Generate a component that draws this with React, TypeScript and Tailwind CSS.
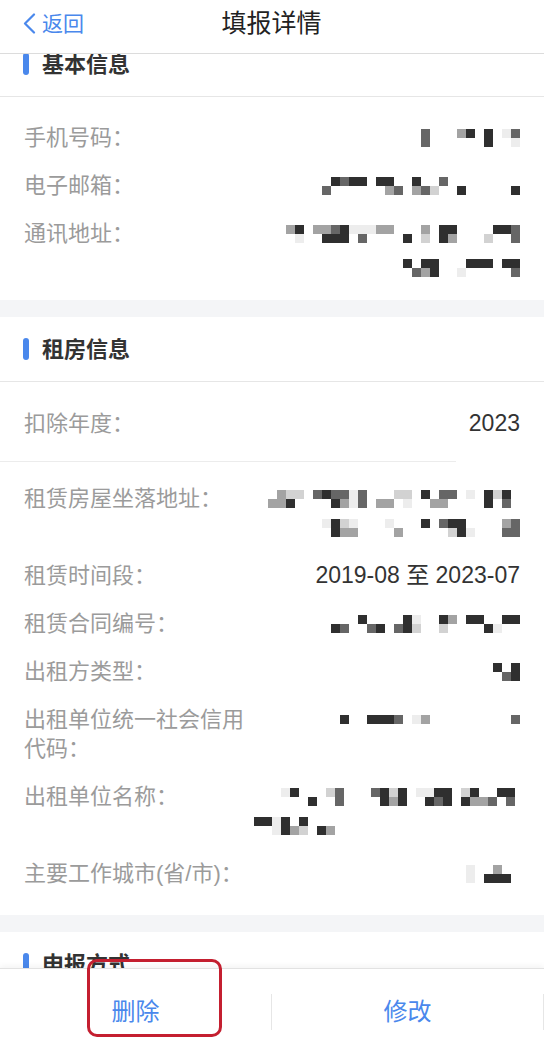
import React from "react";

type Line = { rows: string[]; h?: string };

// pixelated (redacted) values: a = darkest ... e = lightest, "." = empty
const shade: Record<string, string> = {
  a: "bg-[#2f2f2f]",
  b: "bg-[#666666]",
  c: "bg-[#a3a3a3]",
  d: "bg-[#d2d2d2]",
  e: "bg-[#ededed]",
  ".": "bg-transparent",
};

const Mosaic: React.FC<{ lines: Line[] }> = ({ lines }) => (
  <div className="flex flex-col items-end">
    {lines.map((line, i) => (
      <div key={i} className={`flex flex-col justify-center ${line.h ?? "h-[29px]"}`}>
        {line.rows.map((row, j) => (
          <div key={j} className="flex">
            {row.split("").map((ch, k) => (
              <span key={k} className={`block h-[9px] w-[9px] ${shade[ch]}`} />
            ))}
          </div>
        ))}
      </div>
    ))}
  </div>
);

const Row: React.FC<{ label: string; children: React.ReactNode }> = ({ label, children }) => (
  <div className="flex items-start justify-between">
    <div className="w-[230px] shrink-0 text-[22px] leading-[29px] text-[#9b9b9b]">{label}</div>
    <div className="text-right text-[23px] leading-[29px] text-[#333333]">{children}</div>
  </div>
);

const SectionHeader: React.FC<{ title: string }> = ({ title }) => (
  <div className="flex h-[65px] items-center gap-[13px] border-b border-[#e6e6e6] px-[23px]">
    <span className="block h-[22px] w-[6px] rounded-full bg-[#4a88ec]" />
    <span className="text-[22px] font-bold leading-[29px] text-[#333333]">{title}</span>
  </div>
);

const Gap = () => <div className="h-[17px] bg-[#f4f5f7]" />;

const App: React.FC = () => {
  return (
    <div className="relative flex h-[1046px] w-full flex-col overflow-hidden bg-white font-['Liberation_Sans','Noto_Sans_CJK_SC',sans-serif]">
      {/* nav bar */}
      <div className="relative z-10 flex h-[54px] shrink-0 items-center border-b border-[#dcdcdc] bg-white pb-[7px]">
        <div className="flex flex-1 items-center pl-[23px]">
          <svg width="13" height="21" viewBox="0 0 13 21" fill="none">
            <polyline
              points="11,1.5 2,10.5 11,19.5"
              stroke="#4a88ec"
              strokeWidth="2.2"
              strokeLinecap="round"
              strokeLinejoin="round"
            />
          </svg>
          <span className="ml-[6px] text-[21px] leading-[29px] text-[#4a88ec]">返回</span>
        </div>
        <div className="mr-[24px] text-[25px] leading-[32px] text-[#222222]">填报详情</div>
        <div className="flex-1" />
      </div>

      {/* scrolled content */}
      <div className="flex-1 overflow-hidden">
        <div className="-mt-[22px]">
          <SectionHeader title="基本信息" />
          <div className="flex flex-col gap-[19px] px-[24px] pt-[26px] pb-[12px]">
            <Row label="手机号码：">
              <Mosaic lines={[{ rows: ["b...ca.a.eb", "b......a..e"] }]} />
            </Row>
            <Row label="电子邮箱：">
              <Mosaic lines={[{ rows: [".abaa.aa..a..b........", "b......cb.cbd..a.....a"] }]} />
            </Row>
            <Row label="通讯地址：">
              <Mosaic
                lines={[
                  { rows: ["ca.ccbaeeecc...c.aa....aab", ".e..aaa.b....a.d.ac...d..b"] },
                  { rows: ["a.aa...aaa.aa", ".bca..e.....b"], h: "h-[40px]" },
                ]}
              />
            </Row>
          </div>

          <Gap />

          <SectionHeader title="租房信息" />
          <div className="px-[24px] pt-[27px] pb-[23px]">
            <Row label="扣除年度：">2023</Row>
          </div>
          <div className="h-px w-[456px] bg-[#ececec]" />
          <div className="flex flex-col gap-[19px] px-[24px] pt-[22px] pb-[27px]">
            <Row label="租赁房屋坐落地址：">
              <Mosaic
                lines={[
                  { rows: [".cdd.babbeb...dd.a.bb.e.ada.", "cca....aceb.cc.e..cc....a.b."] },
                  { rows: ["eade...e...a.baa....cb", ".acc....c.....dae...bb"] },
                ]}
              />
            </Row>
            <Row label="租赁时间段：">2019-08 至 2023-07</Row>
            <Row label="租赁合同编号：">
              <Mosaic lines={[{ rows: ["...a....ae..ac.aa..aa", "ab..ba.bad..d....ae.."] }]} />
            </Row>
            <Row label="出租方类型：">
              <Mosaic lines={[{ rows: ["a.a", ".ba"] }]} />
            </Row>
            <Row label="出租单位统一社会信用代码：">
              <Mosaic lines={[{ rows: ["a..aaab.ec.........b"] }]} />
            </Row>
            <Row label="出租单位名称：">
              <Mosaic
                lines={[
                  {
                    rows: [
                      "...ea...db...bada.eeaa.da..aa.",
                      "......a..b....aca..aba.accb.b.",
                    ],
                  },
                  {
                    rows: [
                      "aaea.a........................",
                      "..eacd.ac.....................",
                    ],
                  },
                ]}
              />
            </Row>
            <Row label="主要工作城市(省/市)：">
              <Mosaic lines={[{ rows: ["e..c..", "e.aaa."] }]} />
            </Row>
          </div>

          <Gap />

          <SectionHeader title="申报方式" />
        </div>
      </div>

      {/* bottom action bar */}
      <div className="relative z-10 flex h-[78px] shrink-0 items-center border-t border-[#e2e2e2] bg-white pt-[8px] shadow-[0_-2px_6px_rgba(0,0,0,0.05)]">
        <button className="flex flex-1 justify-center text-[24px] leading-[29px] text-[#4a88ec]">删除</button>
        <span className="block h-[36px] w-px bg-[#e6e6e6]" />
        <button className="flex flex-1 justify-center text-[24px] leading-[29px] text-[#4a88ec]">修改</button>
        <span className="block h-[36px] w-px bg-[#e6e6e6]" />
      </div>

      {/* red annotation box */}
      <div className="absolute left-[87px] top-[959px] z-20 h-[78px] w-[135px] rounded-[10px] border-[3.5px] border-[#c41f30]" />
    </div>
  );
};

export default App;
